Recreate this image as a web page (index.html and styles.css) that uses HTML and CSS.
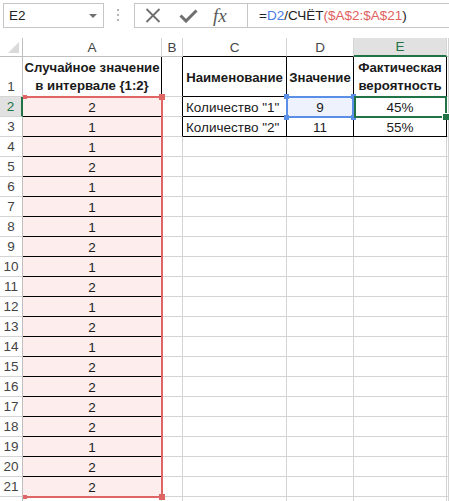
FILE: index.html
```html
<!DOCTYPE html>
<html>
<head>
<meta charset="utf-8">
<link rel="stylesheet" href="styles.css">
</head>
<body>
<div class="fbar">
  <div class="namebox"><span>E2</span><span class="dd"></span></div>
  <div class="grip"><i></i><i></i><i></i></div>
  <div class="fbox">
    <div class="btns">
      <svg class="ico-x" width="16" height="15" viewBox="0 0 16 15"><path d="M1.5 1 L14.5 14 M14.5 1 L1.5 14" stroke="#6f6f6f" stroke-width="1.8" fill="none"/></svg>
      <svg class="ico-ok" width="19" height="14" viewBox="0 0 19 14"><path d="M1.5 6.5 L7 12 L17.5 1.5" stroke="#6f6f6f" stroke-width="3" fill="none"/></svg>
      <span class="fx">fx</span>
    </div>
    <div class="finput">=<span class="rb">D2</span>/СЧЁТ<span class="rr">($A$2:$A$21</span>)</div>
  </div>
</div>

<div class="sheet">
  <div class="row hdr">
    <div class="c rh corner"><span class="tri"></span></div>
    <div class="c a">A</div><div class="c b">B</div><div class="c cc bkb">C</div><div class="c d bkb">D</div><div class="c e selh">E</div><div class="c f"></div>
  </div>
  <div class="row r1">
    <div class="c rh">1</div>
    <div class="c a bk two"><span>Случайное значение</span><span>в интервале {1:2}</span></div>
    <div class="c b bkr"></div>
    <div class="c cc bk bold">Наименование</div>
    <div class="c d bk bold">Значение</div>
    <div class="c e bk two"><span>Фактическая</span><span>вероятность</span></div>
    <div class="c f"></div>
  </div>
  <div class="row"><div class="c rh selr">2</div><div class="c a pk">2</div><div class="c b bkr"></div><div class="c cc bk left">Количество "1"</div><div class="c d bk dsel">9</div><div class="c e bk">45%</div><div class="c f"></div></div>
  <div class="row"><div class="c rh">3</div><div class="c a pk">1</div><div class="c b bkr"></div><div class="c cc bk left">Количество "2"</div><div class="c d bk">11</div><div class="c e bk">55%</div><div class="c f"></div></div>
  <div class="row"><div class="c rh">4</div><div class="c a pk">1</div><div class="c b"></div><div class="c cc"></div><div class="c d"></div><div class="c e"></div><div class="c f"></div></div>
  <div class="row"><div class="c rh">5</div><div class="c a pk">2</div><div class="c b"></div><div class="c cc"></div><div class="c d"></div><div class="c e"></div><div class="c f"></div></div>
  <div class="row"><div class="c rh">6</div><div class="c a pk">1</div><div class="c b"></div><div class="c cc"></div><div class="c d"></div><div class="c e"></div><div class="c f"></div></div>
  <div class="row"><div class="c rh">7</div><div class="c a pk">1</div><div class="c b"></div><div class="c cc"></div><div class="c d"></div><div class="c e"></div><div class="c f"></div></div>
  <div class="row"><div class="c rh">8</div><div class="c a pk">1</div><div class="c b"></div><div class="c cc"></div><div class="c d"></div><div class="c e"></div><div class="c f"></div></div>
  <div class="row"><div class="c rh">9</div><div class="c a pk">2</div><div class="c b"></div><div class="c cc"></div><div class="c d"></div><div class="c e"></div><div class="c f"></div></div>
  <div class="row"><div class="c rh">10</div><div class="c a pk">1</div><div class="c b"></div><div class="c cc"></div><div class="c d"></div><div class="c e"></div><div class="c f"></div></div>
  <div class="row"><div class="c rh">11</div><div class="c a pk">2</div><div class="c b"></div><div class="c cc"></div><div class="c d"></div><div class="c e"></div><div class="c f"></div></div>
  <div class="row"><div class="c rh">12</div><div class="c a pk">1</div><div class="c b"></div><div class="c cc"></div><div class="c d"></div><div class="c e"></div><div class="c f"></div></div>
  <div class="row"><div class="c rh">13</div><div class="c a pk">2</div><div class="c b"></div><div class="c cc"></div><div class="c d"></div><div class="c e"></div><div class="c f"></div></div>
  <div class="row"><div class="c rh">14</div><div class="c a pk">1</div><div class="c b"></div><div class="c cc"></div><div class="c d"></div><div class="c e"></div><div class="c f"></div></div>
  <div class="row"><div class="c rh">15</div><div class="c a pk">2</div><div class="c b"></div><div class="c cc"></div><div class="c d"></div><div class="c e"></div><div class="c f"></div></div>
  <div class="row"><div class="c rh">16</div><div class="c a pk">2</div><div class="c b"></div><div class="c cc"></div><div class="c d"></div><div class="c e"></div><div class="c f"></div></div>
  <div class="row"><div class="c rh">17</div><div class="c a pk">2</div><div class="c b"></div><div class="c cc"></div><div class="c d"></div><div class="c e"></div><div class="c f"></div></div>
  <div class="row"><div class="c rh">18</div><div class="c a pk">2</div><div class="c b"></div><div class="c cc"></div><div class="c d"></div><div class="c e"></div><div class="c f"></div></div>
  <div class="row"><div class="c rh">19</div><div class="c a pk">1</div><div class="c b"></div><div class="c cc"></div><div class="c d"></div><div class="c e"></div><div class="c f"></div></div>
  <div class="row"><div class="c rh">20</div><div class="c a pk">2</div><div class="c b"></div><div class="c cc"></div><div class="c d"></div><div class="c e"></div><div class="c f"></div></div>
  <div class="row"><div class="c rh">21</div><div class="c a pk">2</div><div class="c b"></div><div class="c cc"></div><div class="c d"></div><div class="c e"></div><div class="c f"></div></div>
  <div class="row"><div class="c rh"></div><div class="c a"></div><div class="c b"></div><div class="c cc"></div><div class="c d"></div><div class="c e"></div><div class="c f"></div></div>

  <div class="ov red-box"></div>
  <div class="ov hd red h-rtl"></div>
  <div class="ov hd red h-rtr"></div>
  <div class="ov hd red h-rbl"></div>
  <div class="ov hd red h-rbr"></div>

  <div class="ov blue-box"></div>
  <div class="ov hd blue h-btl"></div>
  <div class="ov hd blue h-btr"></div>
  <div class="ov hd blue h-bbl"></div>
  <div class="ov hd blue h-bbr"></div>

  <div class="ov green-box"></div>
  <div class="ov fill-handle"></div>
</div>
</body>
</html>
```

FILE: styles.css
```css
html, body {
  margin: 0;
  padding: 0;
  overflow: hidden;
  background: #fff;
}
body {
  width: 449px;
  height: 501px;
  font-family: "Liberation Sans", Arial, sans-serif;
  font-size: 13.5px;
  color: #1a1a1a;
}

/* ---------- formula bar ---------- */
.fbar {
  height: 38px;
  display: flex;
  align-items: flex-start;
}
.namebox {
  margin: 3px 0 0 3px;
  width: 101px;
  height: 25px;
  box-sizing: border-box;
  border: 1px solid #c6c6c6;
  display: flex;
  align-items: center;
  justify-content: space-between;
  padding: 0 6px 0 5px;
  color: #222;
}
.dd {
  width: 0;
  height: 0;
  border-left: 4px solid transparent;
  border-right: 4px solid transparent;
  border-top: 4px solid #707070;
}
.grip {
  margin: 9px 0 0 13px;
  width: 2px;
  display: flex;
  flex-direction: column;
  gap: 3px;
}
.grip i {
  display: block;
  width: 2px;
  height: 2px;
  background: #b5b5b5;
}
.fbox {
  margin: 3px 0 0 15px;
  flex: 1;
  height: 25px;
  box-sizing: border-box;
  border: 1px solid #c6c6c6;
  border-right: none;
  display: flex;
}
.btns {
  width: 113px;
  box-sizing: border-box;
  border-right: 1px solid #c6c6c6;
  display: flex;
  align-items: center;
  padding-left: 10px;
}
.ico-x { display: block; }
.ico-ok { display: block; margin-left: 18px; }
.fx {
  margin-left: 15px;
  font-family: "Liberation Serif", "Times New Roman", serif;
  font-style: italic;
  font-size: 19px;
  color: #5a5a5a;
  line-height: 20px;
}
.finput {
  flex: 1;
  padding-left: 11px;
  line-height: 23px;
  color: #222;
  white-space: nowrap;
}
.rb { color: #4a7ddf; }
.rr { color: #e06060; }

/* ---------- sheet ---------- */
.sheet {
  position: relative;
}
.row {
  display: flex;
  height: 20px;
}
.row.hdr { height: 19px; }
.row.r1 { height: 40px; }

.c {
  box-sizing: border-box;
  border-right: 1px solid #d4d4d4;
  border-bottom: 1px solid #d4d4d4;
  display: flex;
  align-items: center;
  justify-content: center;
  white-space: nowrap;
  overflow: hidden;
  padding-top: 1px;
}
.rh {
  width: 23px;
  border-right-color: #bfbfbf;
  color: #444;
  align-items: flex-end;
  padding-bottom: 1px;
  line-height: 17px;
}
.a { width: 139px; }
.b { width: 21px; }
.cc { width: 104px; }
.d { width: 67px; }
.e { width: 93px; }
.f { flex: 1; }

.hdr .c {
  color: #444;
  border-bottom-color: #bfbfbf;
  padding-top: 0;
}
.hdr .corner {
  align-items: flex-end;
  justify-content: flex-end;
  padding: 0 3px 3px 0;
}
.tri {
  width: 0;
  height: 0;
  border-left: 11px solid transparent;
  border-bottom: 11px solid #dadada;
}
.hdr .bkb { border-bottom-color: #000; }
.hdr .selh {
  background: #e1e1e1;
  color: #217346;
  border-bottom: 2px solid #217346;
}
.selr {
  background: #e1e1e1;
  color: #217346;
  border-right: 2px solid #217346;
}

.r1 .c {
  font-weight: bold;
  font-size: 13.2px;
}
.r1 .rh {
  font-weight: normal;
  font-size: 13.5px;
}
.two {
  flex-direction: column;
  justify-content: flex-end;
  align-items: center;
  text-align: center;
  line-height: 18px;
  padding-bottom: 1px;
}
.bold { font-weight: bold; }

.pk {
  background: #fdeded;
  border-right-color: #000;
  border-bottom-color: #000;
}
.bk {
  border-right-color: #000;
  border-bottom-color: #000;
}
.bkr { border-right-color: #000; }
.left {
  justify-content: flex-start;
  padding-left: 3px;
}
.dsel { background: #eef2fc; }

/* ---------- overlays (range highlights) ---------- */
.ov {
  position: absolute;
  box-sizing: border-box;
  pointer-events: none;
}
.red-box {
  left: 23px;
  top: 58px;
  width: 140px;
  height: 402px;
  border: 2px solid #e06666;
  border-left: none;
}
.hd { width: 5px; height: 5px; }
.red { background: #e06666; }
.h-rtl { left: 23px; top: 57px; width: 4px; height: 4px; }
.h-rtr { left: 159px; top: 56px; width: 6px; height: 6px; }
.h-rbl { left: 23px; top: 457px; width: 4px; height: 4px; }
.h-rbr { left: 159px; top: 456px; width: 6px; height: 6px; }

.blue-box {
  left: 286px;
  top: 58px;
  width: 68px;
  height: 22px;
  border: 2px solid #5b8ee6;
}
.blue { background: #5b8ee6; }
.h-btl { left: 284px; top: 56px; }
.h-btr { left: 351px; top: 56px; }
.h-bbl { left: 284px; top: 77px; }
.h-bbr { left: 351px; top: 77px; }

.green-box {
  left: 354px;
  top: 58px;
  width: 93px;
  height: 22px;
  border: 2px solid #217346;
}
.fill-handle {
  left: 442px;
  top: 75px;
  width: 7px;
  height: 7px;
  background: #217346;
  border-left: 1px solid #fff;
  border-top: 1px solid #fff;
}
```
